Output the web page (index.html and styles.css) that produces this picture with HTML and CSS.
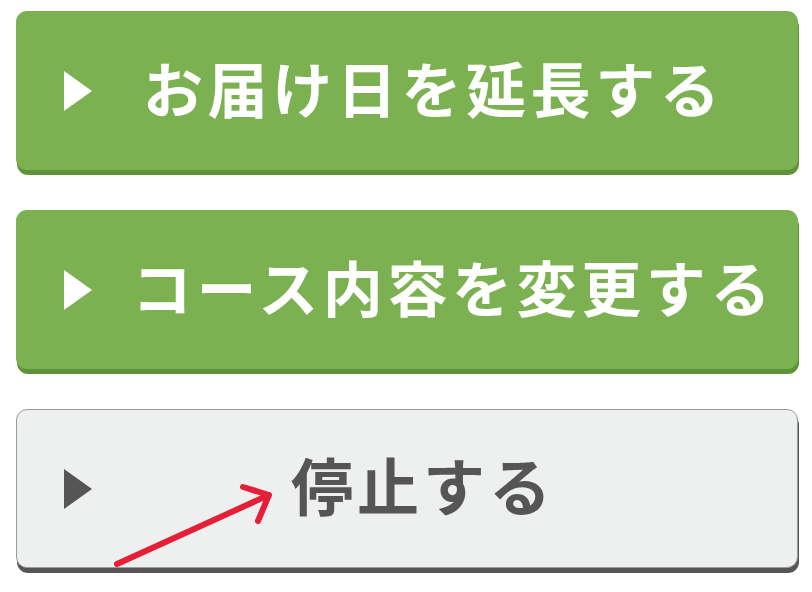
FILE: index.html
```html
<!DOCTYPE html>
<html lang="ja">
<head>
<meta charset="utf-8">
<title>定期コースの変更</title>
<link rel="stylesheet" href="styles.css">
</head>
<body>
<div class="menu">
  <a class="btn btn-green btn-delay" href="#">
    <svg class="tri" viewBox="0 0 28 40" aria-hidden="true"><polygon points="0,0 28,20 0,40"/></svg>
    <span class="label">お届け日を延長する</span>
  </a>
  <a class="btn btn-green btn-course" href="#">
    <svg class="tri" viewBox="0 0 28 40" aria-hidden="true"><polygon points="0,0 28,20 0,40"/></svg>
    <span class="label">コース内容を変更する</span>
  </a>
  <a class="btn btn-grey btn-stop" href="#">
    <svg class="tri" viewBox="0 0 28 40" aria-hidden="true"><polygon points="0,0 28,20 0,40"/></svg>
    <span class="label">停止する</span>
    <svg class="pointer" viewBox="0 0 170 90" aria-hidden="true">
      <path d="M4 85 L156 16 M130 8 L156 16 L145 42"/>
    </svg>
  </a>
</div>
</body>
</html>
```

FILE: styles.css
```css
html, body {
  margin: 0;
  padding: 0;
  background: #ffffff;
}

body {
  font-family: "Noto Sans CJK JP", "Noto Sans", sans-serif;
}

.menu {
  display: flex;
  flex-direction: column;
  gap: 40px;
  padding: 11px 14px 24px 16px;
  width: 782px;
}

.btn {
  position: relative;
  display: flex;
  align-items: center;
  box-sizing: border-box;
  height: 159px;
  padding-left: 48px;
  border-radius: 11px;
  text-decoration: none;
  font-size: 60px;
  font-weight: 700;
  letter-spacing: 4.6px;
  line-height: 1;
}

.btn .label {
  position: relative;
  top: -4px;
}

.btn-green {
  background: #7cb152;
  color: #ffffff;
  box-shadow: 1px 5px 0 #5f9338;
}

.btn-green .tri {
  fill: #ffffff;
}

.btn-grey {
  background: #eef0ef;
  color: #555555;
  border: 1px solid #9a9a9a;
  padding-left: 47px;
  box-shadow: 1px 5px 0 #555555;
}

.btn-grey .tri {
  fill: #555555;
}

.tri {
  width: 28px;
  height: 40px;
  flex: none;
}

.btn-delay .label {
  margin-left: 51px;
}

.btn-course .label {
  margin-left: 40px;
}

.btn-stop .label {
  margin-left: 199px;
  font-size: 62px;
  letter-spacing: 4px;
  top: -5px;
}

.pointer {
  position: absolute;
  left: 96px;
  bottom: -2px;
  width: 170px;
  height: 90px;
  overflow: visible;
}

.pointer path {
  fill: none;
  stroke: #e51f37;
  stroke-width: 6;
  stroke-linecap: round;
  stroke-linejoin: round;
}
```
